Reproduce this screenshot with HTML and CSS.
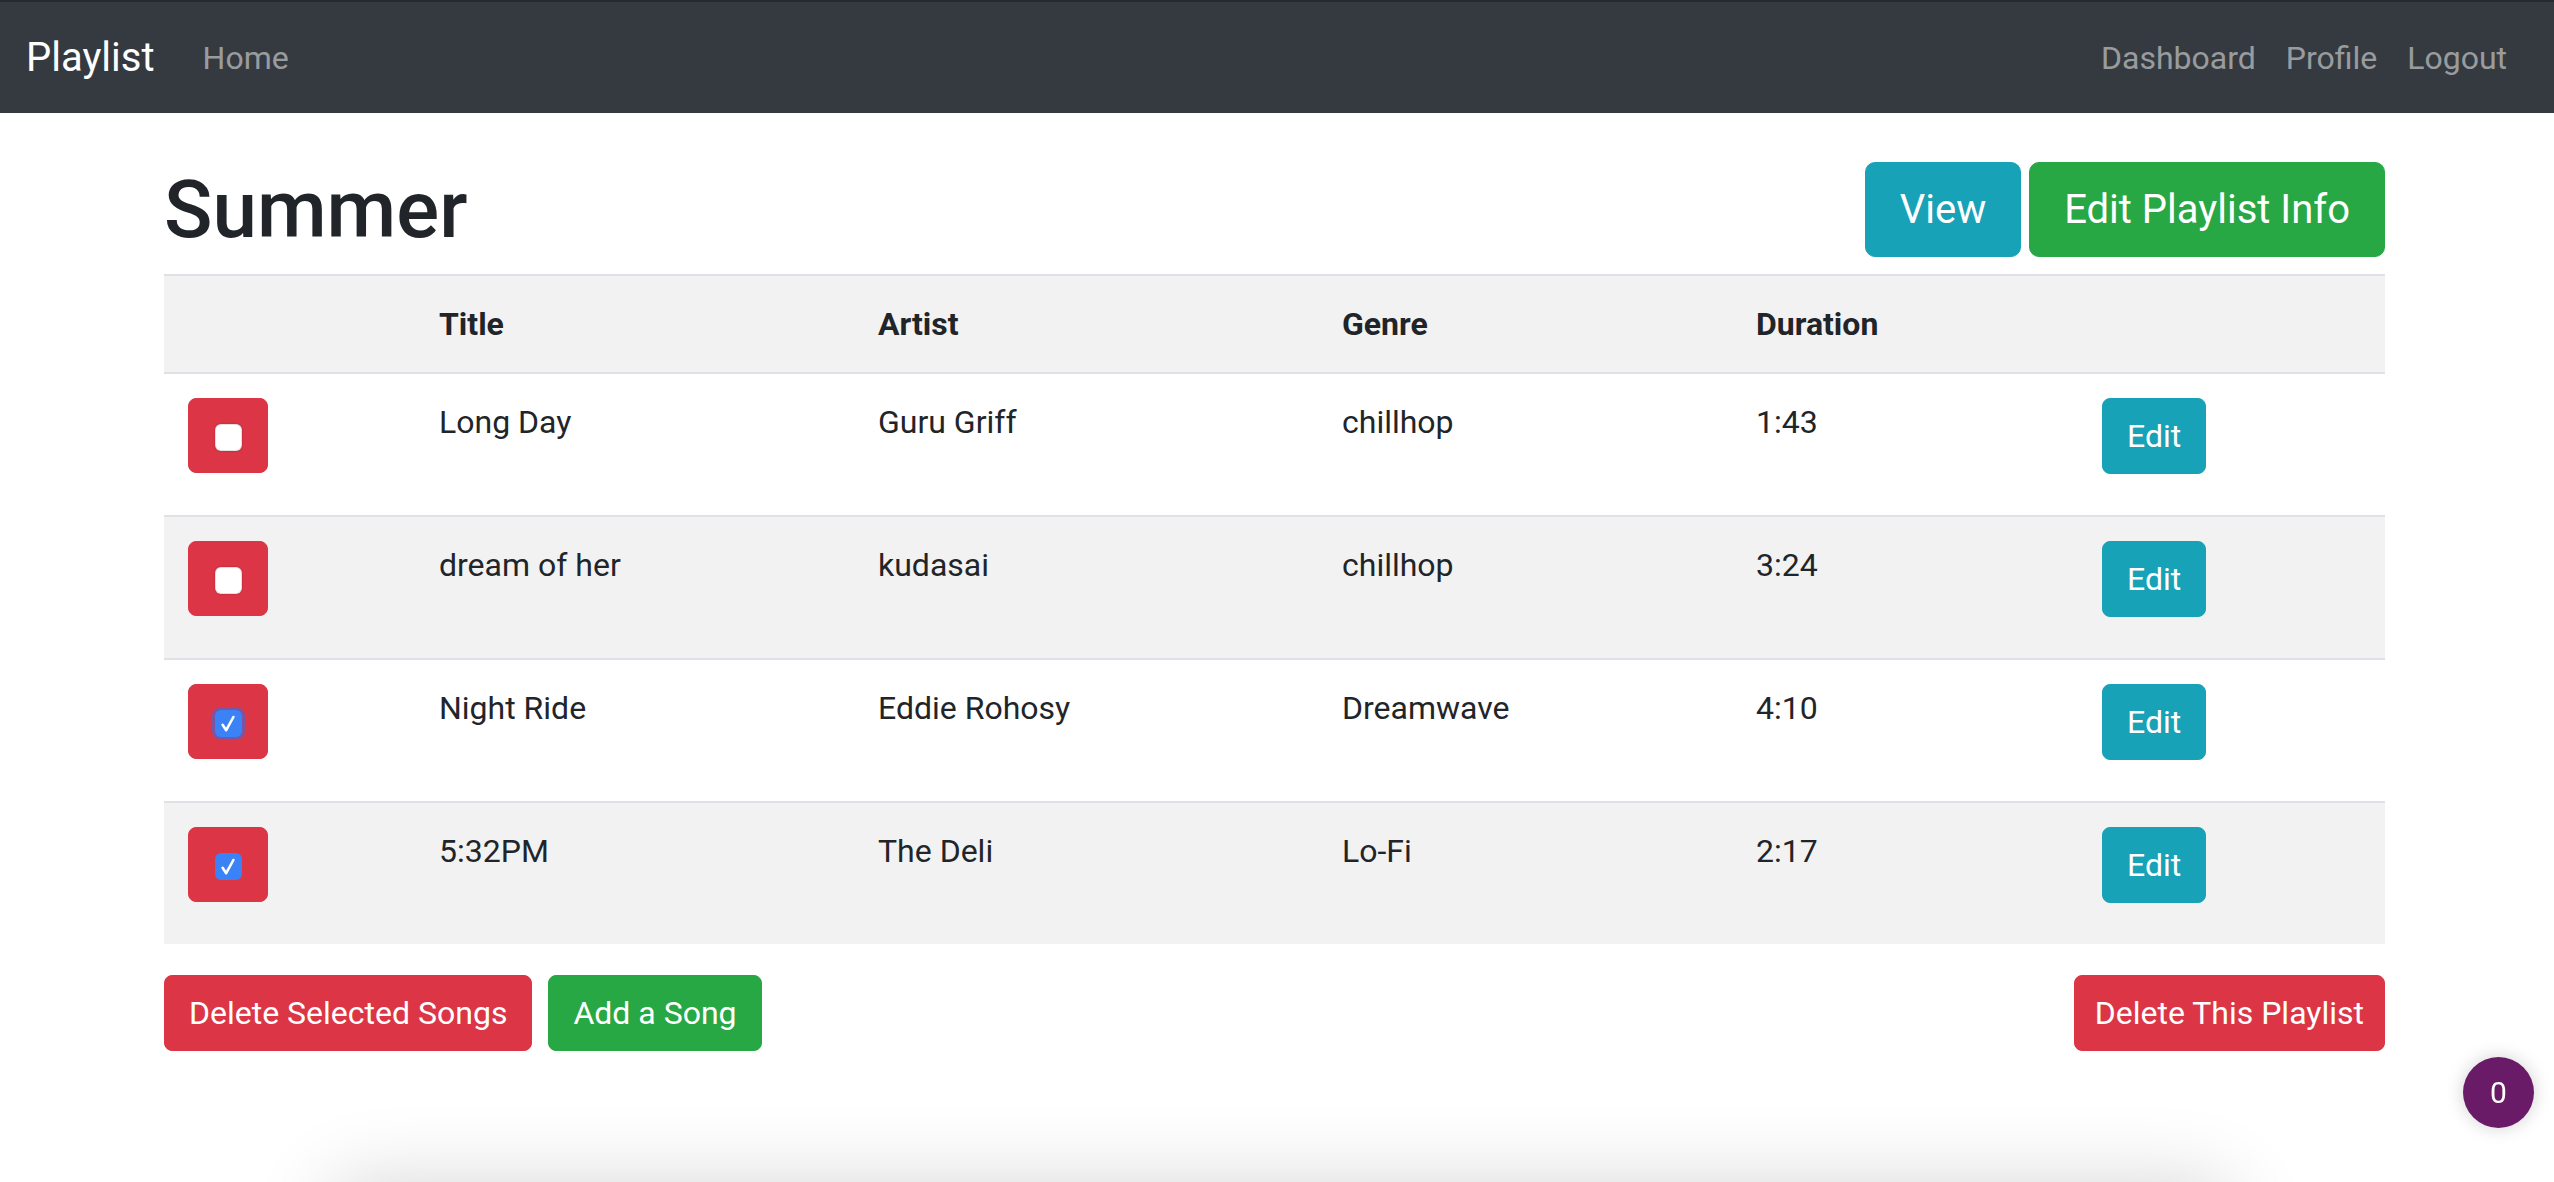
FILE: index.html
```html
<!DOCTYPE html>
<html lang="en">
<head>
<meta charset="utf-8">
<title>Playlist</title>
<link rel="stylesheet" href="styles.css">
</head>
<body>
<nav class="navbar">
  <div class="nav-left">
    <a class="brand" href="#">Playlist</a>
    <a class="nav-link" href="#">Home</a>
  </div>
  <div class="nav-right">
    <a class="nav-link" href="#">Dashboard</a>
    <a class="nav-link" href="#">Profile</a>
    <a class="nav-link" href="#">Logout</a>
  </div>
</nav>

<main class="page">
  <div class="title-row">
    <h1 class="title">Summer</h1>
    <div class="title-actions">
      <a class="btn btn-lg btn-info" href="#">View</a>
      <a class="btn btn-lg btn-success" href="#">Edit Playlist Info</a>
    </div>
  </div>

  <table class="songs">
    <tbody>
      <tr class="head">
        <th class="c-check"></th>
        <th class="c-title">Title</th>
        <th class="c-artist">Artist</th>
        <th class="c-genre">Genre</th>
        <th class="c-dur">Duration</th>
        <th class="c-edit"></th>
      </tr>
      <tr>
        <td><span class="btn btn-danger check-btn"><span class="check"></span></span></td>
        <td>Long Day</td>
        <td>Guru Griff</td>
        <td>chillhop</td>
        <td>1:43</td>
        <td><a class="btn btn-info" href="#">Edit</a></td>
      </tr>
      <tr class="striped">
        <td><span class="btn btn-danger check-btn"><span class="check"></span></span></td>
        <td>dream of her</td>
        <td>kudasai</td>
        <td>chillhop</td>
        <td>3:24</td>
        <td><a class="btn btn-info" href="#">Edit</a></td>
      </tr>
      <tr>
        <td><span class="btn btn-danger check-btn"><span class="check on focus"><svg viewBox="0 0 24 24" width="24" height="24"><path d="M6.6 12.8 L10.2 18.2 L17.4 5" fill="none" stroke="#fff" stroke-width="2.6" stroke-linecap="round" stroke-linejoin="round"/></svg></span></span></td>
        <td>Night Ride</td>
        <td>Eddie Rohosy</td>
        <td>Dreamwave</td>
        <td>4:10</td>
        <td><a class="btn btn-info" href="#">Edit</a></td>
      </tr>
      <tr class="striped">
        <td><span class="btn btn-danger check-btn"><span class="check on"><svg viewBox="0 0 24 24" width="24" height="24"><path d="M6.6 12.8 L10.2 18.2 L17.4 5" fill="none" stroke="#fff" stroke-width="2.6" stroke-linecap="round" stroke-linejoin="round"/></svg></span></span></td>
        <td>5:32PM</td>
        <td>The Deli</td>
        <td>Lo-Fi</td>
        <td>2:17</td>
        <td><a class="btn btn-info" href="#">Edit</a></td>
      </tr>
    </tbody>
  </table>

  <div class="bottom-actions">
    <a class="btn btn-danger" href="#">Delete Selected Songs</a>
    <a class="btn btn-success" href="#">Add a Song</a>
    <a class="btn btn-danger push-right" href="#">Delete This Playlist</a>
  </div>
</main>

<div class="player-shadow"></div>
<div class="counter">0</div>
</body>
</html>
```

FILE: styles.css
```css
* { box-sizing: border-box; }

html, body {
  margin: 0;
  padding: 0;
  background: #fff;
}

body {
  font-family: Roboto, "Noto Sans", "Liberation Sans", sans-serif;
  font-size: 32px;
  line-height: 48px;
  color: #212529;
  overflow: hidden;
  height: 1182px;
}

a { text-decoration: none; }

/* Navbar */
.navbar {
  height: 113px;
  background: #343a40;
  border-top: 2px solid #272b30;
  display: flex;
  align-items: center;
  justify-content: space-between;
  padding: 0 32px 0 26px;
}

.nav-left, .nav-right {
  display: flex;
  align-items: center;
}

.brand {
  color: #fff;
  font-size: 40px;
  line-height: 60px;
  margin-right: 32px;
}

.nav-link {
  color: rgba(255, 255, 255, 0.5);
  font-size: 32px;
  line-height: 48px;
  padding: 0 16px;
}

.nav-right .nav-link {
  padding: 0 15px;
}

/* Page */
.page {
  padding: 49px 169px 0 164px;
}

.title-row {
  display: flex;
  justify-content: space-between;
  align-items: flex-start;
}

.title {
  margin: 0 0 16px 0;
  font-size: 80px;
  line-height: 96px;
  font-weight: 500;
}

.title-actions {
  display: flex;
  gap: 8px;
}

/* Buttons */
.btn {
  display: inline-block;
  color: #fff;
  font-size: 32px;
  line-height: 48px;
  padding: 13px 24px;
  border: 1px solid transparent;
  border-radius: 8px;
  white-space: nowrap;
}

.btn-lg {
  font-size: 40px;
  line-height: 61px;
  padding: 16px 34px;
  border-radius: 10px;
}

.btn-info { background: #17a2b8; border-color: #17a2b8; }
.btn-success { background: #28a745; border-color: #28a745; }
.btn-danger { background: #dc3545; border-color: #dc3545; }

/* Table */
.songs {
  width: 2221px;
  border-collapse: separate;
  border-spacing: 0;
  table-layout: fixed;
}

.songs th, .songs td {
  text-align: left;
  vertical-align: top;
  border-top: 2px solid #dee2e6;
  padding: 24px 24px 41px 24px;
}

.songs th {
  font-weight: 700;
  padding: 24px;
}

.songs .head, .songs .striped {
  background: #f2f2f2;
}

.c-check { width: 251px; }
.c-title { width: 439px; }
.c-artist { width: 464px; }
.c-genre { width: 414px; }
.c-dur { width: 346px; }
.c-edit { width: 307px; }

.check-btn {
  width: 80px;
  height: 75px;
  padding: 4px 0 0 0;
  display: flex;
  align-items: center;
  justify-content: center;
}

.check {
  width: 27px;
  height: 27px;
  border-radius: 6px;
  background: #fff;
  box-shadow: inset 0 0 0 1px rgba(0, 0, 0, 0.12), 0 0 2px rgba(0, 0, 0, 0.25);
  display: flex;
  align-items: center;
  justify-content: center;
}

.check.on {
  background: #3b82f6;
  box-shadow: none;
}

.check.focus {
  box-shadow: 0 0 0 3px rgba(88, 96, 196, 0.75);
}

/* Bottom actions */
.bottom-actions {
  display: flex;
  gap: 16px;
  margin-top: 31px;
}

.push-right {
  margin-left: auto;
  padding-left: 20px;
  padding-right: 20px;
}

/* Overlays */
.player-shadow {
  position: fixed;
  left: 330px;
  right: 324px;
  top: 1182px;
  height: 200px;
  background: #fff;
  border-radius: 24px;
  box-shadow: 0 0 80px rgba(0, 0, 0, 0.16);
}

.counter {
  position: fixed;
  right: 20px;
  top: 1057px;
  width: 71px;
  height: 71px;
  border-radius: 50%;
  background: #6a1b67;
  color: #fff;
  font-size: 30px;
  line-height: 71px;
  text-align: center;
  box-shadow: 0 0 18px rgba(0, 0, 0, 0.18);
}
```
